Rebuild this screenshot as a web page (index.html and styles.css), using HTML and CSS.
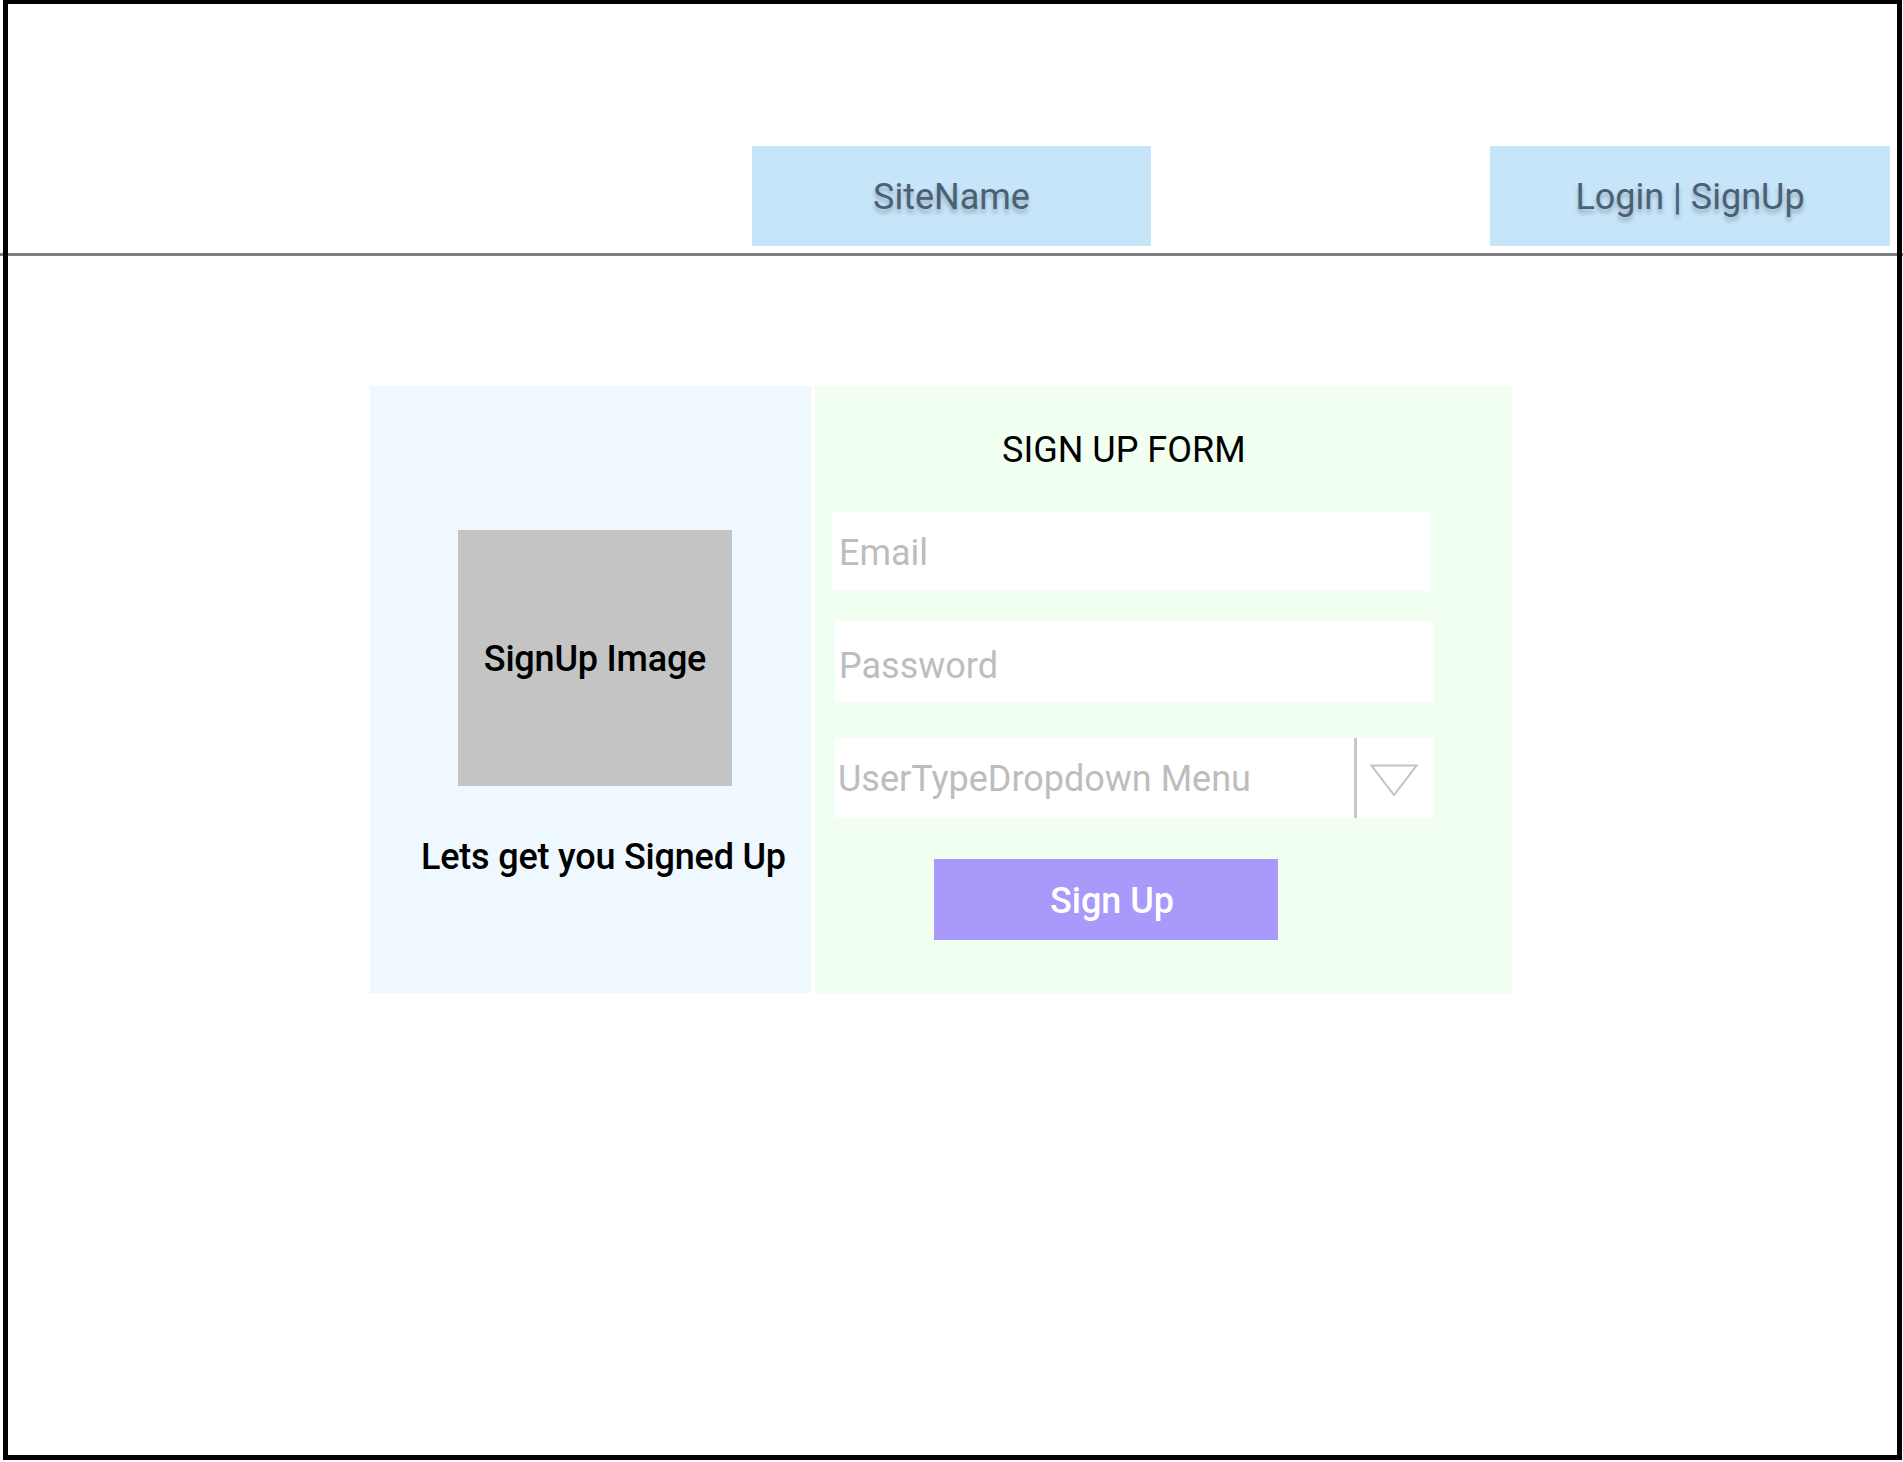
FILE: index.html
```html
<!DOCTYPE html>
<html lang="en">
<head>
<meta charset="utf-8">
<title>Sign Up</title>
<link rel="stylesheet" href="styles.css">
</head>
<body>
<div class="page">
  <header class="topbar">
    <div class="nav-box site-name">SiteName</div>
    <div class="nav-box auth-links">Login | SignUp</div>
  </header>
  <main class="content">
    <section class="intro-panel">
      <div class="image-placeholder">SignUp Image</div>
      <p class="intro-text">Lets get you Signed Up</p>
    </section>
    <section class="form-panel">
      <h1 class="form-title">SIGN UP FORM</h1>
      <div class="field field-email">Email</div>
      <div class="field field-password">Password</div>
      <div class="field field-select">
        <span class="select-label">UserTypeDropdown Menu</span>
        <span class="select-divider"></span>
        <svg class="select-arrow" width="48" height="33" viewBox="0 0 48 33" aria-hidden="true">
          <polygon points="1.5,1.5 46.5,1.5 24,31" fill="none" stroke="#c4c4c4" stroke-width="2"/>
        </svg>
      </div>
      <button class="submit-btn" type="button">Sign Up</button>
    </section>
  </main>
</div>
</body>
</html>
```

FILE: styles.css
```css
html, body {
  margin: 0;
  padding: 0;
  background: #ffffff;
}

body {
  font-family: Roboto, "Liberation Sans", Arial, sans-serif;
  font-size: 36px;
  font-weight: 400;
  line-height: 42px;
  color: #000000;
}

.page {
  position: relative;
  width: 1903px;
  height: 1462px;
}

.page::after {
  content: "";
  position: absolute;
  left: 3px;
  top: -1px;
  width: 1899px;
  height: 1461px;
  border: 5px solid #000000;
  box-sizing: border-box;
  pointer-events: none;
}

/* Header */
.topbar {
  display: flex;
  align-items: flex-start;
  height: 256px;
  box-sizing: border-box;
  padding: 146px 0 0 752px;
  border-bottom: 3px solid #808080;
}

.nav-box {
  display: flex;
  align-items: center;
  justify-content: center;
  box-sizing: border-box;
  height: 100px;
  padding-top: 2px;
  background: #c6e5f9;
  color: #4b6074;
  text-shadow: 0 4px 4px rgba(0, 0, 0, 0.25);
}

.site-name {
  width: 399px;
}

.auth-links {
  width: 400px;
  margin-left: 339px;
}

/* Main */
.content {
  display: flex;
  padding: 130px 0 0 370px;
}

.intro-panel {
  width: 441px;
  height: 607px;
  background: #f0f8ff;
  display: flex;
  flex-direction: column;
  align-items: flex-start;
}

.image-placeholder {
  margin: 144px 0 0 88px;
  width: 274px;
  height: 256px;
  box-sizing: border-box;
  padding-top: 2px;
  background: #c4c4c4;
  display: flex;
  align-items: center;
  justify-content: center;
  color: #000000;
  font-weight: 500;
  letter-spacing: -0.2px;
}

.intro-text {
  margin: 50px 0 0 51px;
  white-space: nowrap;
  font-weight: 500;
  letter-spacing: -0.2px;
}

.form-panel {
  width: 697px;
  height: 607px;
  margin-left: 4px;
  background: #f0fff0;
  display: flex;
  flex-direction: column;
  align-items: flex-start;
}

.form-title {
  margin: 43px 0 0 187px;
  font-size: 36px;
  font-weight: 400;
  line-height: 42px;
}

.field {
  display: flex;
  align-items: center;
  box-sizing: border-box;
  width: 598px;
  background: #ffffff;
  color: #bdbdbd;
}

.field-email {
  margin: 41px 0 0 17px;
  height: 79px;
  padding: 2px 0 0 7px;
}

.field-password {
  margin: 30px 0 0 20px;
  height: 81px;
  padding: 8px 0 0 4px;
}

.field-select {
  margin: 36px 0 0 20px;
  height: 80px;
  align-items: stretch;
}

.select-label {
  width: 519px;
  box-sizing: border-box;
  padding: 2px 0 0 3px;
  display: flex;
  align-items: center;
  white-space: nowrap;
}

.select-divider {
  width: 3px;
  background: #c8c8c8;
}

.select-arrow {
  align-self: center;
  margin: 4px 0 0 13px;
}

.submit-btn {
  margin: 41px 0 0 119px;
  width: 344px;
  height: 81px;
  border: 0;
  padding: 2px 0 0 12px;
  background: #a899fb;
  color: #ffffff;
  font-family: inherit;
  font-size: 36px;
  font-weight: 500;
  line-height: 42px;
  text-align: center;
}
```
